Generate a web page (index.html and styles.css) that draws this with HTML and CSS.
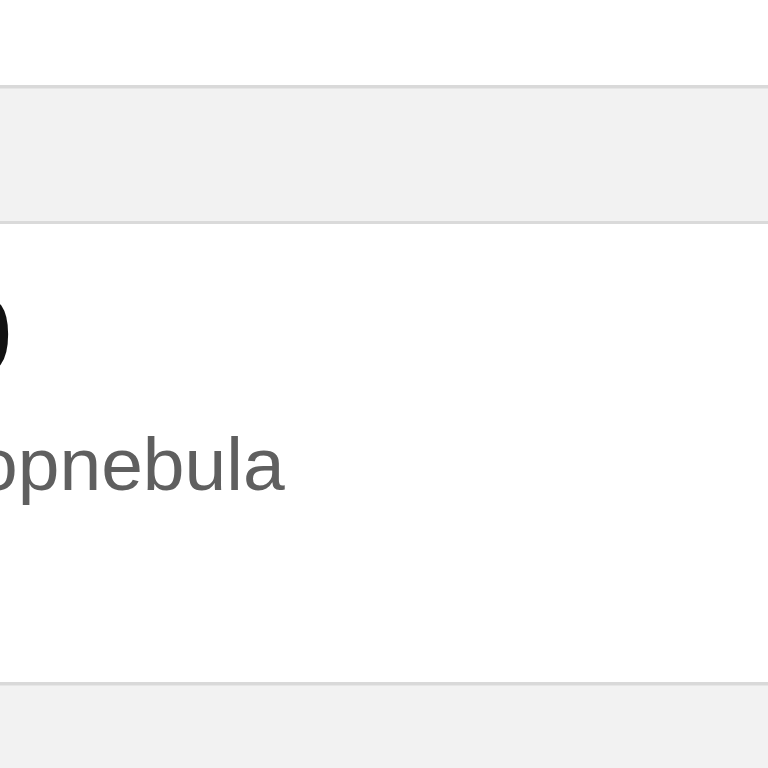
FILE: index.html
```html
<!DOCTYPE html>
<html>
<head>
<meta charset="utf-8">
<link rel="stylesheet" href="styles.css">
</head>
<body>
<div class="page">
  <div class="top"></div>
  <div class="band"></div>
  <div class="card">
    <div class="count">9</div>
    <div class="handle">opnebula</div>
  </div>
  <div class="band bottom"></div>
</div>
</body>
</html>
```
FILE: styles.css
```css
html, body {
  margin: 0;
  padding: 0;
  background: #ffffff;
  overflow: hidden;
}
.page {
  width: 768px;
  height: 768px;
  display: flex;
  flex-direction: column;
  font-family: "Liberation Sans", Arial, sans-serif;
}
.top {
  height: 85px;
  background: #ffffff;
}
.band {
  height: 133px;
  background: #f2f2f2;
  border-top: 3px solid #d9d9d9;
  box-shadow: inset 0 1px 0 #e6e6e6;
}
.card {
  height: 458px;
  background: #ffffff;
  border-top: 3px solid #dadada;
  display: flex;
  flex-direction: column;
}
.count {
  margin-top: 56px;
  margin-left: -50px;
  font-size: 112px;
  line-height: 112px;
  font-weight: 700;
  color: #111111;
}
.handle {
  margin-top: 32px;
  margin-left: -24px;
  font-size: 75px;
  line-height: 80px;
  color: #5f5f5f;
}
.bottom {
  flex: 1;
}
```
